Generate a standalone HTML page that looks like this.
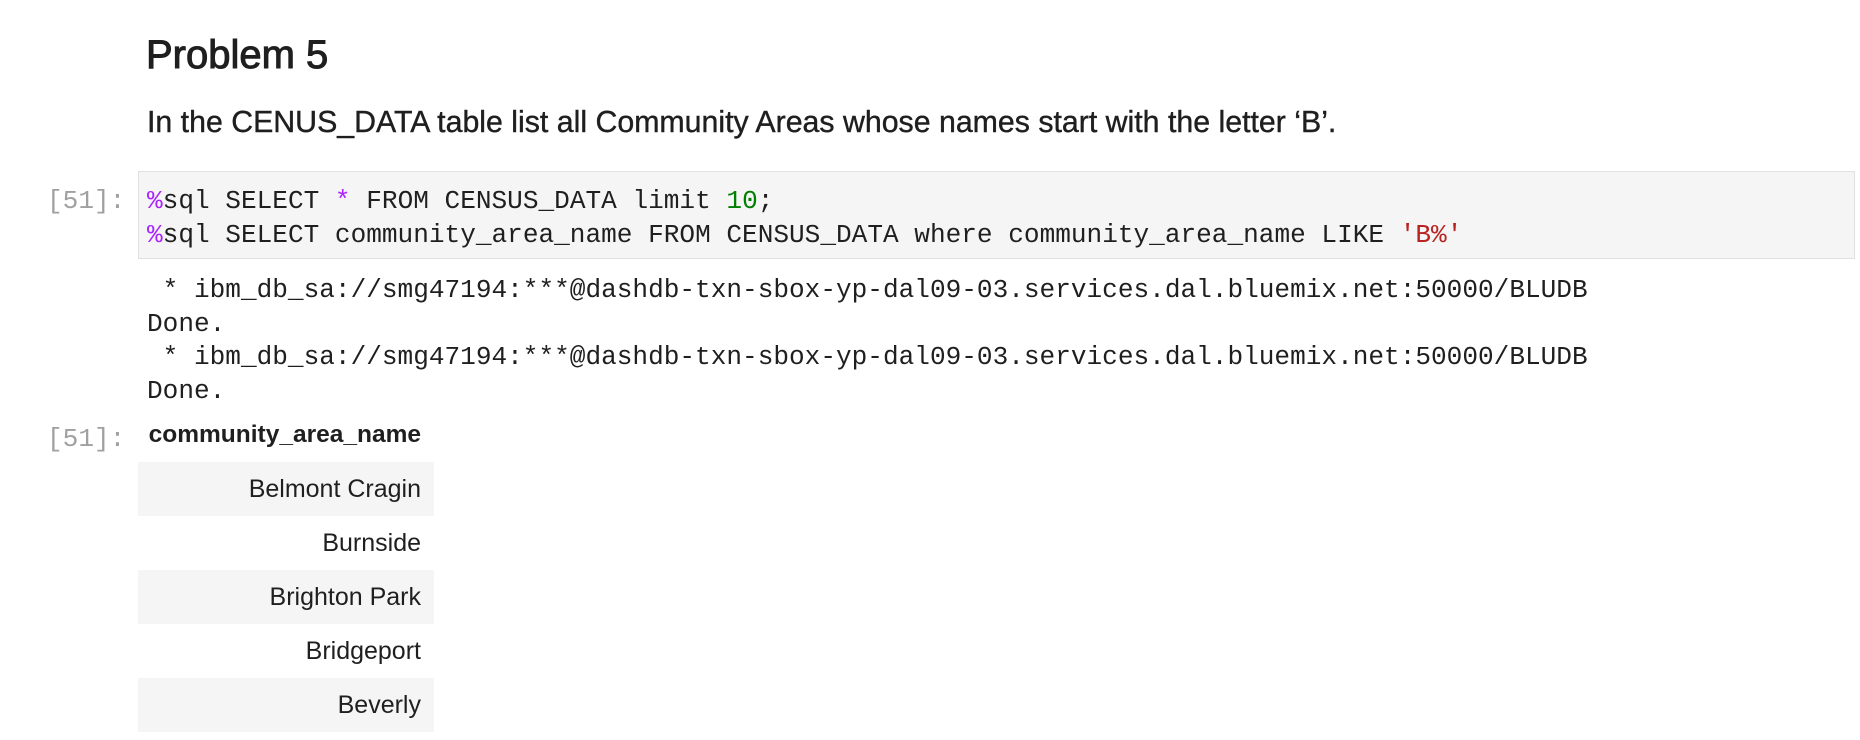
<!DOCTYPE html>
<html><head><meta charset="utf-8"><style>
body{margin:0;width:1860px;height:740px;background:#fff;position:relative;overflow:hidden;font-family:"Liberation Sans",sans-serif;color:#1f1f1f}
.a{position:absolute;white-space:pre}
.mono{font-family:"Liberation Mono",monospace;font-size:26.1px}
.pr{color:#a0a0a0}
.code{position:absolute;left:138px;top:171px;width:1717px;height:88px;background:#f5f5f5;border:1px solid #e0e0e0;box-sizing:border-box}
.p{color:#aa22ff}.n{color:#008000}.s{color:#ba2121}
.row{position:absolute;left:138px;width:296px;height:54px;box-sizing:border-box;text-align:right;padding-right:13px;font-size:25px;line-height:54px}
</style></head><body>
<div class="a" style="left:146px;top:33px;font-size:40px;-webkit-text-stroke:1px #1f1f1f">Problem 5</div>
<div class="a" style="left:147px;top:106px;font-size:30.3px;-webkit-text-stroke:0.4px #1f1f1f">In the CENUS_DATA table list all Community Areas whose names start with the letter ‘B’.</div>
<div class="code"></div>
<div class="a mono pr" style="left:47px;top:184px;line-height:34px">[51]:</div>
<div class="a mono" style="left:147px;top:184px;line-height:34px"><span class="p">%</span>sql SELECT <span class="p">*</span> FROM CENSUS_DATA limit <span class="n">10</span>;
<span class="p">%</span>sql SELECT community_area_name FROM CENSUS_DATA where community_area_name LIKE <span class="s">'B%'</span></div>
<div class="a mono" style="left:147px;top:274px;line-height:33.5px"> * ibm_db_sa://smg47194:***@dashdb-txn-sbox-yp-dal09-03.services.dal.bluemix.net:50000/BLUDB
Done.
 * ibm_db_sa://smg47194:***@dashdb-txn-sbox-yp-dal09-03.services.dal.bluemix.net:50000/BLUDB
Done.</div>
<div class="a mono pr" style="left:47px;top:422px;line-height:34px">[51]:</div>
<div class="row" style="top:408px;font-weight:bold;font-size:24.5px">community_area_name</div>
<div class="row" style="top:462px;background:#f5f5f5">Belmont Cragin</div>
<div class="row" style="top:516px">Burnside</div>
<div class="row" style="top:570px;background:#f5f5f5">Brighton Park</div>
<div class="row" style="top:624px">Bridgeport</div>
<div class="row" style="top:678px;background:#f5f5f5">Beverly</div>
</body></html>
